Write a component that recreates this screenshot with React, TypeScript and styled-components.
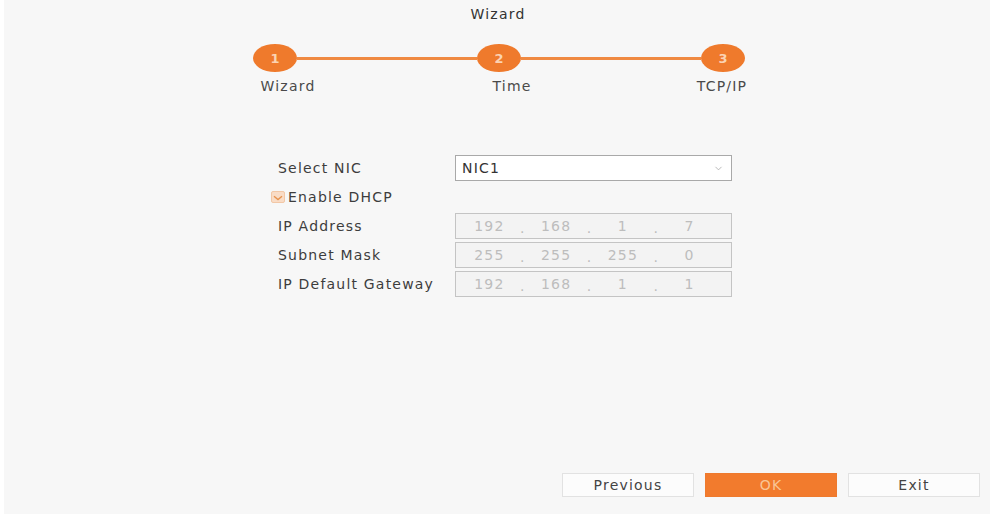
import React from 'react'
import styled, { createGlobalStyle } from 'styled-components'
import { ChevronDown } from 'lucide-react'

const GlobalStyle = createGlobalStyle`
  html, body {
    margin: 0;
    padding: 0;
    background: #ffffff;
  }
  body {
    font-family: 'DejaVu Sans', Verdana, sans-serif;
    font-size: 14px;
    letter-spacing: 1.2px;
    color: #444;
  }
`

const steps = [
  { num: 1, label: 'Wizard', shift: 13 },
  { num: 2, label: 'Time', shift: 13 },
  { num: 3, label: 'TCP/IP', shift: -1 },
]

const ipFields = [
  { label: 'IP Address', value: ['192', '168', '1', '7'] },
  { label: 'Subnet Mask', value: ['255', '255', '255', '0'] },
  { label: 'IP Default Gateway', value: ['192', '168', '1', '1'] },
]

const App = () => {
  return (
    <>
      <GlobalStyle />
      <Panel>
        <Title>Wizard</Title>

        <Track>
          {steps.map((step, i) => (
            <React.Fragment key={step.num}>
              {i > 0 && <Line />}
              <Circle>{step.num}</Circle>
            </React.Fragment>
          ))}
        </Track>
        <StepLabels>
          {steps.map((step) => (
            <StepLabel key={step.label} $shift={step.shift}>
              {step.label}
            </StepLabel>
          ))}
        </StepLabels>

        <Form>
          <FieldRow>
            <FieldLabel>Select NIC</FieldLabel>
            <SelectBox>
              <span>NIC1</span>
              <ChevronDown size={11} color='#9a9a9a' strokeWidth={1.5} />
            </SelectBox>
          </FieldRow>

          <CheckRow>
            <CheckBox>
              <svg width='10' height='7' viewBox='0 0 10 7'>
                <path
                  d='M1 2.2 L5 5.6 L9 2.2'
                  fill='none'
                  stroke='#e7934f'
                  strokeWidth='1.4'
                />
              </svg>
            </CheckBox>
            <span>Enable DHCP</span>
          </CheckRow>

          <IpList>
            {ipFields.map((field) => (
              <FieldRow key={field.label}>
                <FieldLabel>{field.label}</FieldLabel>
                <IpBox>
                  {field.value.map((part, i) => (
                    <React.Fragment key={i}>
                      {i > 0 && <IpDot>.</IpDot>}
                      <IpPart>{part}</IpPart>
                    </React.Fragment>
                  ))}
                </IpBox>
              </FieldRow>
            ))}
          </IpList>
        </Form>

        <Footer>
          <Button>Previous</Button>
          <Button $primary>OK</Button>
          <Button>Exit</Button>
        </Footer>
      </Panel>
    </>
  )
}

const Panel = styled.div`
  display: flex;
  flex-direction: column;
  width: 986px;
  height: 514px;
  margin-left: 4px;
  background: #f7f7f7;
  box-sizing: border-box;
`

const Title = styled.div`
  height: 28px;
  line-height: 28px;
  text-align: center;
  color: #333;
  padding-left: 2px;
`

const Track = styled.div`
  display: flex;
  align-items: center;
  align-self: center;
  margin-top: 16px;
  margin-left: 4px;
`

const Circle = styled.div`
  width: 44px;
  height: 28px;
  border-radius: 50%;
  background: #ef7a2c;
  color: #fbd3b3;
  font-size: 13px;
  font-weight: bold;
  letter-spacing: 0;
  display: flex;
  align-items: center;
  justify-content: center;
`

const Line = styled.div`
  width: 180px;
  height: 3px;
  background: #f08a42;
`

const StepLabels = styled.div`
  display: grid;
  grid-template-columns: repeat(3, 224px);
  align-self: center;
  margin-left: 4px;
  margin-top: 5px;
  line-height: 18px;
  color: #4a4a4a;
`

const StepLabel = styled.div<{ $shift: number }>`
  text-align: center;
  transform: translateX(${(p) => p.$shift}px);
`

const Form = styled.div`
  display: flex;
  flex-direction: column;
  margin-top: 60px;
  margin-left: 267px;
  width: 461px;
`

const FieldRow = styled.div`
  display: flex;
  align-items: center;
  height: 26px;
`

const FieldLabel = styled.div`
  width: 184px;
  padding-left: 7px;
  box-sizing: border-box;
  color: #3d3d3d;
`

const SelectBox = styled.div`
  flex: 1;
  height: 26px;
  box-sizing: border-box;
  border: 1px solid #a9a9a9;
  background: #ffffff;
  display: flex;
  align-items: center;
  justify-content: space-between;
  padding: 0 7px 0 6px;
  color: #333;
`

const CheckRow = styled.div`
  display: flex;
  align-items: center;
  height: 32px;
  gap: 3px;
  color: #3d3d3d;
`

const CheckBox = styled.div`
  width: 14px;
  height: 12px;
  border-radius: 2px;
  background: #f9dcc6;
  border: 1px solid #f2c7a6;
  box-sizing: border-box;
  display: flex;
  align-items: center;
  justify-content: center;
`

const IpList = styled.div`
  display: flex;
  flex-direction: column;
  gap: 3px;
`

const IpBox = styled.div`
  flex: 1;
  height: 26px;
  box-sizing: border-box;
  border: 1px solid #c4c4c4;
  background: #f3f3f3;
  display: flex;
  align-items: center;
  padding-right: 8px;
  color: #bdbdbd;
`

const IpPart = styled.span`
  flex: 1;
  text-align: center;
`

const IpDot = styled.span`
  width: 0;
  display: flex;
  justify-content: center;
  position: relative;
  top: 2px;
`

const Footer = styled.div`
  display: flex;
  justify-content: flex-end;
  gap: 11px;
  margin-top: auto;
  margin-bottom: 17px;
  padding-right: 10px;
`

const Button = styled.div<{ $primary?: boolean }>`
  width: 132px;
  height: 24px;
  box-sizing: border-box;
  display: flex;
  align-items: center;
  justify-content: center;
  border: 1px solid ${(p) => (p.$primary ? '#ee7a2e' : '#e2e2e2')};
  background: ${(p) => (p.$primary ? '#f27b2d' : '#fcfcfc')};
  color: ${(p) => (p.$primary ? '#f9c596' : '#444')};
`

export default App
